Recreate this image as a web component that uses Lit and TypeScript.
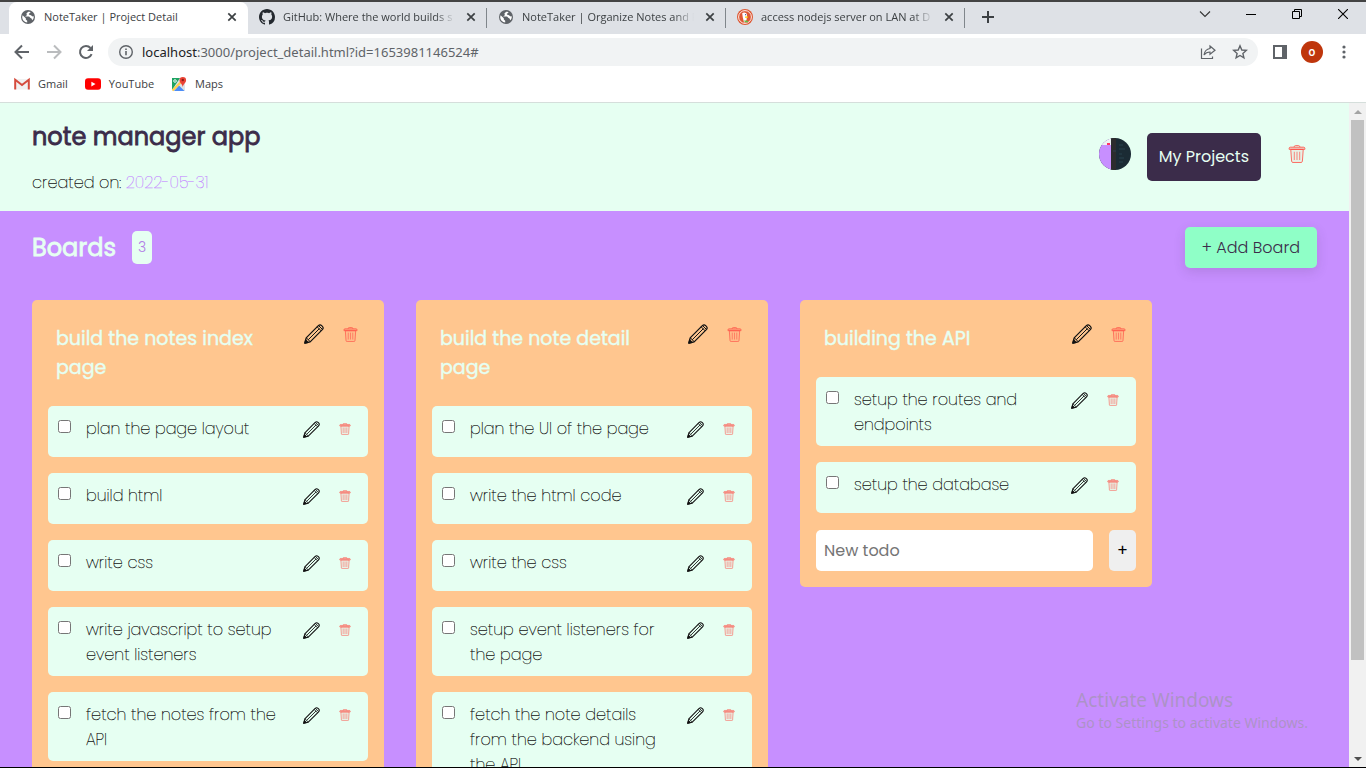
import { LitElement, html, css, nothing } from "lit";
import { customElement, property } from "lit/decorators.js";
import { classMap } from "lit/directives/class-map.js";

interface Board { title: string; todos: string[]; form?: boolean; }

const BOARDS: Board[] = [
  {
    title: "build the notes index page",
    todos: ["plan the page layout", "build html", "write css", "write javascript to setup event listeners", "fetch the notes from the API"],
  },
  {
    title: "build the note detail page",
    todos: ["plan the UI of the page", "write the html code", "write the css", "setup event listeners for the page", "fetch the note details from the backend using the API"],
  },
  { title: "building the API", todos: ["setup the routes and endpoints", "setup the database"], form: true },
];

const globe = html`<svg width="16" height="16" viewBox="0 0 16 16"><circle cx="8" cy="8" r="7" fill="#5f6368"/><path d="M2.6 6.3 5.8 9.3V10.6L7.2 11.8V13.4C4.300 13.200 2.200 10.900 2.200 8ZM8.800 2.500C8.200 3.300 7.200 3.300 6.600 4.200 6 5.100 7.300 5.500 6.600 6.400 6 7 5.200 6.800 5.300 7.600H8.800C9.800 7.600 9.700 9.200 11 9.200 11.800 9.400 11.900 10.600 12.300 11.300 13.400 10.200 13.900 8.800 13.700 7.300 12.500 7.600 11.600 7.200 11 6.300 10 5.900 8.700 6 8.800 5 9 4.200 10.300 4.500 10.500 3.200Z" fill="#fff"/></svg>`;

const octocat = html`<svg width="16" height="16" viewBox="0 0 16 16"><path fill="#24292f" d="M8 0C3.580 0 0 3.580 0 8c0 3.540 2.290 6.530 5.470 7.590.4.070.55-.17.55-.38 0-.19-.01-.82-.01-1.490-2.010.37-2.530-.49-2.690-.94-.09-.23-.48-.94-.82-1.130-.28-.15-.68-.52-.01-.53.63-.01 1.080.58 1.230.82.72 1.210 1.870.87 2.330.66.070-.52.280-.87.510-1.070-1.780-.2-3.640-.89-3.640-3.950 0-.87.310-1.590.820-2.150-.080-.2-.360-1.020.080-2.120 0 0 .670-.21 2.200.820.640-.180 1.320-.270 2-.270s1.360.090 2 .270c1.530-1.040 2.200-.820 2.200-.820.440 1.100.160 1.920.080 2.120.510.560.820 1.270.820 2.150 0 3.070-1.870 3.750-3.650 3.950.290.250.540.730.540 1.480 0 1.070-.010 1.930-.010 2.200 0 .210.150.460.550.380A8.010 8.010 0 0 0 16 8c0-4.420-3.580-8-8-8z"/></svg>`;

const duck = html`<svg width="16" height="16" viewBox="0 0 16 16"><circle cx="8" cy="8" r="8" fill="#de5833"/><circle cx="8" cy="8" r="6.400" fill="none" stroke="#fff" stroke-width=".9"/><path d="M5.200 4.200C6.500 2.800 9.600 3.200 10 5.800L9.600 10.500 8.200 13.600 7 13.200 5.800 8.500Z" fill="#fff"/><path d="M8 7.600h3.200l-.3 1.100H8Z" fill="#fdd20a"/><path d="M7.300 11.200 11 12v1.500l-3.400-.4Z" fill="#65bc46"/><circle cx="8.600" cy="5.700" r=".6" fill="#2d4f8e"/></svg>`;

const cross = html`<svg width="16" height="16" viewBox="0 0 16 16"><path d="M4.300 4.300l7.400 7.400M11.700 4.300l-7.400 7.400" stroke="#3c4043" stroke-width="1.700" fill="none"/></svg>`;

const pencil = (size: number) => html`<svg width=${size} height=${size} viewBox="0 0 24 24" fill="none" stroke="currentColor" stroke-width="1.500" stroke-linejoin="round"><path d="M1 23 2.600 16.600 17.200 2C18.500.8 20 .8 21.200 2L22 2.800C23.200 4 23.200 5.500 22 6.800L7.400 21.400Z"/><path d="M2.600 16.600 5.200 18.800 7.400 21.400M5 19 18.600 5.400M15.800 3.400 20.600 8.200M17.400 1.800 22.200 6.600" stroke-width="1.200"/><path d="M1 23l1-3.800 2.800 2.800Z" fill="currentColor"/></svg>`;

const bin = (size: number) => html`<svg width=${size} height=${size} viewBox="0 0 24 24" fill="none" stroke="#ff5148" stroke-width="1.100"><path d="M1.500 5.800V4.500C1.500 3.500 2.200 2.900 3.200 2.900H20.800C21.800 2.900 22.500 3.500 22.500 4.500V5.800Z" fill="#ff5148" fill-opacity=".3"/><path d="M8.300 2.700C8.300 1.200 9 .8 10 .8H14C15 .8 15.700 1.200 15.700 2.700"/><path d="M3.700 6 4.800 21.600C4.900 22.700 5.600 23.300 6.600 23.300H17.400C18.400 23.300 19.100 22.700 19.200 21.600L20.300 6Z" fill="#ff5148" fill-opacity=".08"/><path d="M8.400 9V20M12 9V20M15.600 9V20" stroke-width=".9"/></svg>`;

@customElement("todo-item")
class TodoItem extends LitElement {
  @property() text = "";
  static styles = css`
    :host { display: block; }
    .todo { display: flex; align-items: flex-start; min-height: 51px; padding: 10px 16px 9px 10px; border-radius: 5px; background: #e6fff2; box-sizing: border-box; }
    input { flex: none; width: 13px; height: 13px; margin: 4px 15px 0 0; }
    label { flex: 1; font-weight: 200; font-size: 16px; line-height: 25px; color: #111; -webkit-text-stroke: 0.25px currentColor; }
    button { flex: none; display: flex; align-items: center; justify-content: center; height: 26px; padding: 0; border: 0; background: none; color: #111; }
    .edit { width: 18px; margin: 0 18px 0 14px; }
    .delete { width: 14px; }
  `;
  render() {
    return html`<div class="todo">
      <input id="done" type="checkbox" /><label for="done">${this.text}</label>
      <button class="edit" aria-label="Edit todo">${pencil(17)}</button>
      <button class="delete" aria-label="Delete todo">${bin(12)}</button>
    </div>`;
  }
}

@customElement("board-card")
class BoardCard extends LitElement {
  @property({ attribute: false }) board!: Board;
  static styles = css`
    :host { display: block; }
    .board { padding: 24px 16px 16px; border-radius: 5px; background: #ffc68f; }
    header { display: flex; align-items: flex-start; padding: 0 8px 24px; }
    h3 { flex: 1; margin: 0; font-size: 19px; line-height: 29px; font-weight: 400; -webkit-text-stroke: 0.4px currentColor; color: #e6fff2; }
    header button { display: flex; align-items: center; justify-content: center; height: 20px; padding: 0; border: 0; background: none; color: #111; }
    .edit { width: 20px; margin: 0 16px; }
    .delete { width: 20px; }
    ul { list-style: none; margin: 0; padding: 0; display: flex; flex-direction: column; gap: 16px; }
    form { display: flex; gap: 16px; margin-top: 17px; }
    input { flex: 1; min-width: 0; height: 41px; box-sizing: border-box; padding: 0 8px; border: 0; border-radius: 5px; background: #fff; font: inherit; font-size: 16px; }
    input::placeholder { color: #757575; }
    .add { width: 27px; padding: 0; border: 0; border-radius: 5px; background: #efefef; color: #000; font: inherit; font-size: 16px; }
  `;
  render() {
    return html`<article class="board">
      <header>
        <h3>${this.board.title}</h3>
        <button class="edit" aria-label="Edit board">${pencil(22)}</button>
        <button class="delete" aria-label="Delete board">${bin(15)}</button>
      </header>
      <ul>${this.board.todos.map((t) => html`<li><todo-item .text=${t}></todo-item></li>`)}</ul>
      ${this.board.form
        ? html`<form @submit=${(e: Event) => e.preventDefault()}>
            <input type="text" placeholder="New todo" aria-label="New todo" /><button class="add">+</button>
          </form>`
        : nothing}
    </article>`;
  }
}

@customElement("browser-chrome")
class BrowserChrome extends LitElement {
  static styles = css`
    :host { display: block; font-family: "Segoe UI", "Open Sans", "Noto Sans", sans-serif; font-size: 11px; color: #3c4043; border-top: 2px solid #434343; border-bottom: 1px solid #d5dedb; background: #fff; }
    svg { display: block; flex: none; }
    button { display: flex; align-items: center; justify-content: center; padding: 0; border: 0; background: none; font: inherit; color: inherit; }
    .strip { display: flex; height: 32px; background: #dee1e6; padding-left: 9px; }
    .tab { position: relative; display: flex; align-items: center; gap: 8px; width: 239px; box-sizing: border-box; padding: 0 8px 2px 11px; }
    .tab.active { background: #fff; border-radius: 8px 8px 0 0; }
    .tab:not(.active)::after { content: ""; position: absolute; right: 0; top: 6px; width: 1px; height: 20px; background: #80868b; }
    .title, .name { padding-bottom: 2px; white-space: nowrap; }
    .title { flex: 1; min-width: 0; }
    .title.faded { mask-image: linear-gradient(to right, #000 calc(100% - 20px), transparent 100%); }
    .new { width: 46px; height: 30px; }
    .controls { display: flex; margin-left: auto; height: 24px; }
    .controls button { width: 46px; }
    .toolbar { display: flex; align-items: center; gap: 4px; height: 36px; padding: 0 8px; }
    .toolbar button { width: 28px; height: 28px; }
    .address { flex: 1; display: flex; align-items: center; height: 28px; margin: 0 4px; padding: 0 10px; gap: 8px; border-radius: 14px; background: #f1f3f4; color: #5f6368; }
    .url { flex: 1; white-space: nowrap; font-family: "Segoe UI", "Noto Sans", sans-serif; font-size: 13px; }
    .url b { font-weight: 400; color: #202124; }
    .address button { width: 16px; height: 16px; margin-left: 8px; }
    .user { width: 22px; height: 22px; border-radius: 50%; background: #bf360c; color: #fff; font: 500 12px/22px Roboto, sans-serif; }
    .bookmarks { display: flex; gap: 17px; align-items: center; height: 28px; padding: 0 14px 4px; }
    .bookmarks a { display: flex; align-items: center; gap: 8px; color: inherit; text-decoration: none; }
  `;
  private tab(icon: unknown, title: string, active = false) {
    return html`<div class=${classMap({ tab: true, active })}>${icon}<span class=${classMap({ title: true, faded: !active })}>${title}</span><button aria-label="Close tab">${cross}</button></div>`;
  }
  render() {
    return html`
      <div class="strip">
        ${this.tab(globe, "NoteTaker | Project Detail", true)}
        ${this.tab(octocat, "GitHub: Where the world builds s")}
        ${this.tab(globe, "NoteTaker | Organize Notes and P")}
        ${this.tab(duck, "access nodejs server on LAN at D")}
        <button class="new" aria-label="New tab"><svg width="12" height="12" viewBox="0 0 12 12"><path d="M6 0v12M0 6h12" stroke="#3c4043" stroke-width="2"/></svg></button>
        <div class="controls">
          <button aria-label="Search tabs"><svg width="12" height="12" viewBox="0 0 12 12"><path d="M1 3.500 6 8.500 11 3.500" fill="none" stroke="#333" stroke-width="1.100"/></svg></button>
          <button aria-label="Minimize"><svg width="10" height="10" viewBox="0 0 10 10"><path d="M0 5.500h10" stroke="#000"/></svg></button>
          <button aria-label="Restore"><svg width="10" height="10" viewBox="0 0 10 10"><path d="M.5 2.500h7v7h-7zM2.500 2.500v-2h7v7h-2" fill="none" stroke="#000"/></svg></button>
          <button aria-label="Close"><svg width="10" height="10" viewBox="0 0 10 10"><path d="M0 0 10 10M10 0 0 10" stroke="#000" stroke-width="1.100"/></svg></button>
        </div>
      </div>
      <div class="toolbar">
        <button aria-label="Back"><svg width="16" height="16" viewBox="0 0 16 16"><path d="M15 8H2M8 1.500 1.500 8 8 14.500" fill="none" stroke="#5f6368" stroke-width="2"/></svg></button>
        <button aria-label="Forward"><svg width="16" height="16" viewBox="0 0 16 16"><path d="M1 8h13M8 1.500 14.500 8 8 14.500" fill="none" stroke="#babcbe" stroke-width="2"/></svg></button>
        <button aria-label="Reload"><svg width="16" height="16" viewBox="0 0 16 16"><path d="M13.600 10.200A6 6 0 1 1 12.500 4" fill="none" stroke="#5f6368" stroke-width="2"/><path d="M15 1v6H9Z" fill="#5f6368"/></svg></button>
        <div class="address">
          <svg width="16" height="16" viewBox="0 0 16 16"><circle cx="8" cy="8" r="6.300" fill="none" stroke="#5f6368" stroke-width="1.400"/><path d="M8 7v4.300M8 4.500v1.600" stroke="#5f6368" stroke-width="1.600"/></svg>
          <span class="url"><b>localhost</b>:3000/project_detail.html?id=1653981146524#</span>
          <button aria-label="Share"><svg width="16" height="16" viewBox="0 0 16 16"><path d="M1.500 4.500V14.500H12.500V12.500" fill="none" stroke="#5f6368" stroke-width="1.200"/><path d="M10 2 15 6.300 10 10.300V8C7.500 8 5.600 8.800 4 11 4.500 7.500 6.500 5 10 4.500Z" fill="none" stroke="#5f6368" stroke-width="1.200"/></svg></button>
          <button aria-label="Bookmark"><svg width="16" height="16" viewBox="0 0 16 16"><path d="M8 1.800 9.800 6 14.300 6.400 10.900 9.400 11.900 13.800 8 11.500 4.100 13.800 5.100 9.400 1.700 6.400 6.200 6Z" fill="none" stroke="#5f6368" stroke-width="1.400"/></svg></button>
        </div>
        <button aria-label="Side panel"><svg width="14" height="14" viewBox="0 0 14 14"><path d="M1 1h12v12H1z" fill="#fff" stroke="#5f6368" stroke-width="2"/><path d="M9 0h5v14H9z" fill="#5f6368"/></svg></button>
        <button aria-label="Profile"><span class="user">o</span></button>
        <button aria-label="Menu"><svg width="4" height="14" viewBox="0 0 4 14"><g fill="#5f6368"><circle cx="2" cy="2" r="1.600"/><circle cx="2" cy="7" r="1.600"/><circle cx="2" cy="12" r="1.600"/></g></svg></button>
      </div>
      <nav class="bookmarks">
        <a href="#"><svg width="16" height="16" viewBox="0 0 16 16"><path d="M1.500 3h13v10.500h-13z" fill="#f1f1f1"/><path d="M1.200 13.500V3.800L8 9 14.800 3.800V13.500" fill="none" stroke="#d54b3d" stroke-width="2"/></svg><span class="name">Gmail</span></a>
        <a href="#"><svg width="16" height="16" viewBox="0 0 16 16"><rect y="2.300" width="16" height="11.500" rx="3" fill="#f00"/><path d="M6.400 5.700v4.700L10.500 8z" fill="#fff"/></svg><span class="name">YouTube</span></a>
        <a href="#"><svg width="16" height="16" viewBox="0 0 16 16"><rect x="1" y="2" width="13" height="13" rx="1" fill="#dfe3e6"/><path d="M1 2h8L1 14z" fill="#1ea362"/><path d="M3 15 8 9.500 13.500 15z" fill="#4c8df6"/><path d="M1.500 14.500 11 5" stroke="#ffd04b" stroke-width="2.300"/><path d="M8.500 4.200a3.300 3.300 0 1 1 6.600 0C15.100 6.700 12.600 7.500 11.800 11 11 7.500 8.500 6.700 8.500 4.200z" fill="#ea4335"/><circle cx="11.800" cy="4" r="1.200" fill="#8e1d15"/><circle cx="4" cy="5" r="1.300" fill="none" stroke="#fff" stroke-width=".9"/></svg><span class="name">Maps</span></a>
      </nav>`;
  }
}

@customElement("app-root")
class AppRoot extends LitElement {
  static styles = css`
    :host { position: relative; display: flex; flex-direction: column; height: 100vh; box-sizing: border-box; overflow: hidden; border-bottom: 1px solid #000; font-family: Poppins, Inter, "Open Sans", sans-serif; }
    browser-chrome { flex: none; }
    .viewport { flex: 1; min-height: 0; display: flex; }
    main { flex: 1; min-width: 0; overflow: hidden; background: #c78fff; }
    .project { display: flex; align-items: flex-start; justify-content: space-between; padding: 16px 43px 16px 32px; background: #e6fff2; }
    h1, h2, p { margin: 0; }
    h1, h2 { font-size: 24px; line-height: 36px; font-weight: 400; -webkit-text-stroke: 0.8px currentColor; }
    h1 { color: #3b2c4a; }
    .created { margin-top: 16px; font-size: 16px; line-height: 24px; font-weight: 200; color: #111; -webkit-text-stroke: 0.25px currentColor; }
    .created time { color: #c78fff; }
    .actions { display: flex; align-items: flex-start; padding-top: 14px; }
    .photo { width: 32px; height: 32px; margin: 5px 16px 0 0; border-radius: 50%; overflow: hidden; }
    .photo svg { display: block; }
    .projects { padding: 12px; border-radius: 5px; background: #3b2c4a; color: #e6fff2; font-size: 16px; line-height: 24px; text-decoration: none; font-weight: 400; }
    button { font: inherit; border: 0; padding: 0; }
    .remove { display: flex; align-items: center; height: 42px; margin-left: 27px; background: none; }
    .heading { display: flex; align-items: center; padding: 16px 32px 32px; }
    h2 { color: #e6fff2; }
    .count { margin-left: 16px; padding: 4px 6px; border-radius: 5px; background: #e6fff2; color: #b17ce6; font-size: 14px; line-height: 25px; font-weight: 300; }
    .add { margin-left: auto; height: 41px; padding: 0 17px; border-radius: 5px; background: #8fffc7; color: #3b2c4a; font-size: 16px; font-weight: 300; box-shadow: 0 4px 12px rgba(59, 44, 74, .15); }
    .boards { display: flex; align-items: flex-start; gap: 32px; padding: 0 32px; }
    board-card { flex: none; width: 352px; }
    .scrollbar { width: 17px; display: flex; flex-direction: column; align-items: center; background: #f1f1f1; }
    .arrow { display: flex; align-items: center; justify-content: center; height: 17px; }
    .track { flex: 1; width: 13px; display: flex; flex-direction: column; }
    .thumb { flex: 6; background: #c1c1c1; }
    .rest { flex: 1; }
    .watermark { position: absolute; right: 58px; bottom: 34px; color: rgba(150, 150, 150, .55); font-family: "Segoe UI", "Noto Sans", sans-serif; font-size: 14px; line-height: 20px; pointer-events: none; }
    .watermark strong { display: block; font-size: 19px; line-height: 26px; font-weight: 400; }
  `;
  render() {
    return html`
      <browser-chrome></browser-chrome>
      <div class="viewport">
        <main>
          <header class="project">
            <div>
              <h1>note manager app</h1>
              <p class="created">created on: <time>2022-05-31</time></p>
            </div>
            <div class="actions">
              <span class="photo"><svg width="32" height="32" viewBox="0 0 32 32"><path d="M0 0h32v32H0z" fill="#1b2b34"/><path d="M0 0h12v32H0z" fill="#c78fff"/><path d="M0 0h12v7H0z" fill="#eef4f2"/><path d="M8 5h3v2H8z" fill="#f36"/><path d="M12 0h5v32h-5z" fill="#2c2c2e"/><path d="M14 13h3M20 7h4M20 11h6M20 16h3M20 20h5M20 24h4" stroke="#34505d" stroke-opacity=".6"/></svg></span>
              <a class="projects" href="#">My Projects</a>
              <button class="remove" aria-label="Delete project">${bin(18)}</button>
            </div>
          </header>
          <section>
            <div class="heading">
              <h2>Boards</h2><span class="count">3</span>
              <button class="add">+ Add Board</button>
            </div>
            <div class="boards">${BOARDS.map((b) => html`<board-card .board=${b}></board-card>`)}</div>
          </section>
        </main>
        <div class="scrollbar">
          <span class="arrow"><svg width="8" height="4" viewBox="0 0 8 4"><path d="M0 4 4 0 8 4z" fill="#a3a3a3"/></svg></span>
          <div class="track"><div class="thumb"></div><div class="rest"></div></div>
          <span class="arrow"><svg width="8" height="4" viewBox="0 0 8 4"><path d="M0 0h8L4 4z" fill="#505050"/></svg></span>
        </div>
      </div>
      <div class="watermark"><strong>Activate Windows</strong>Go to Settings to activate Windows.</div>`;
  }
}
